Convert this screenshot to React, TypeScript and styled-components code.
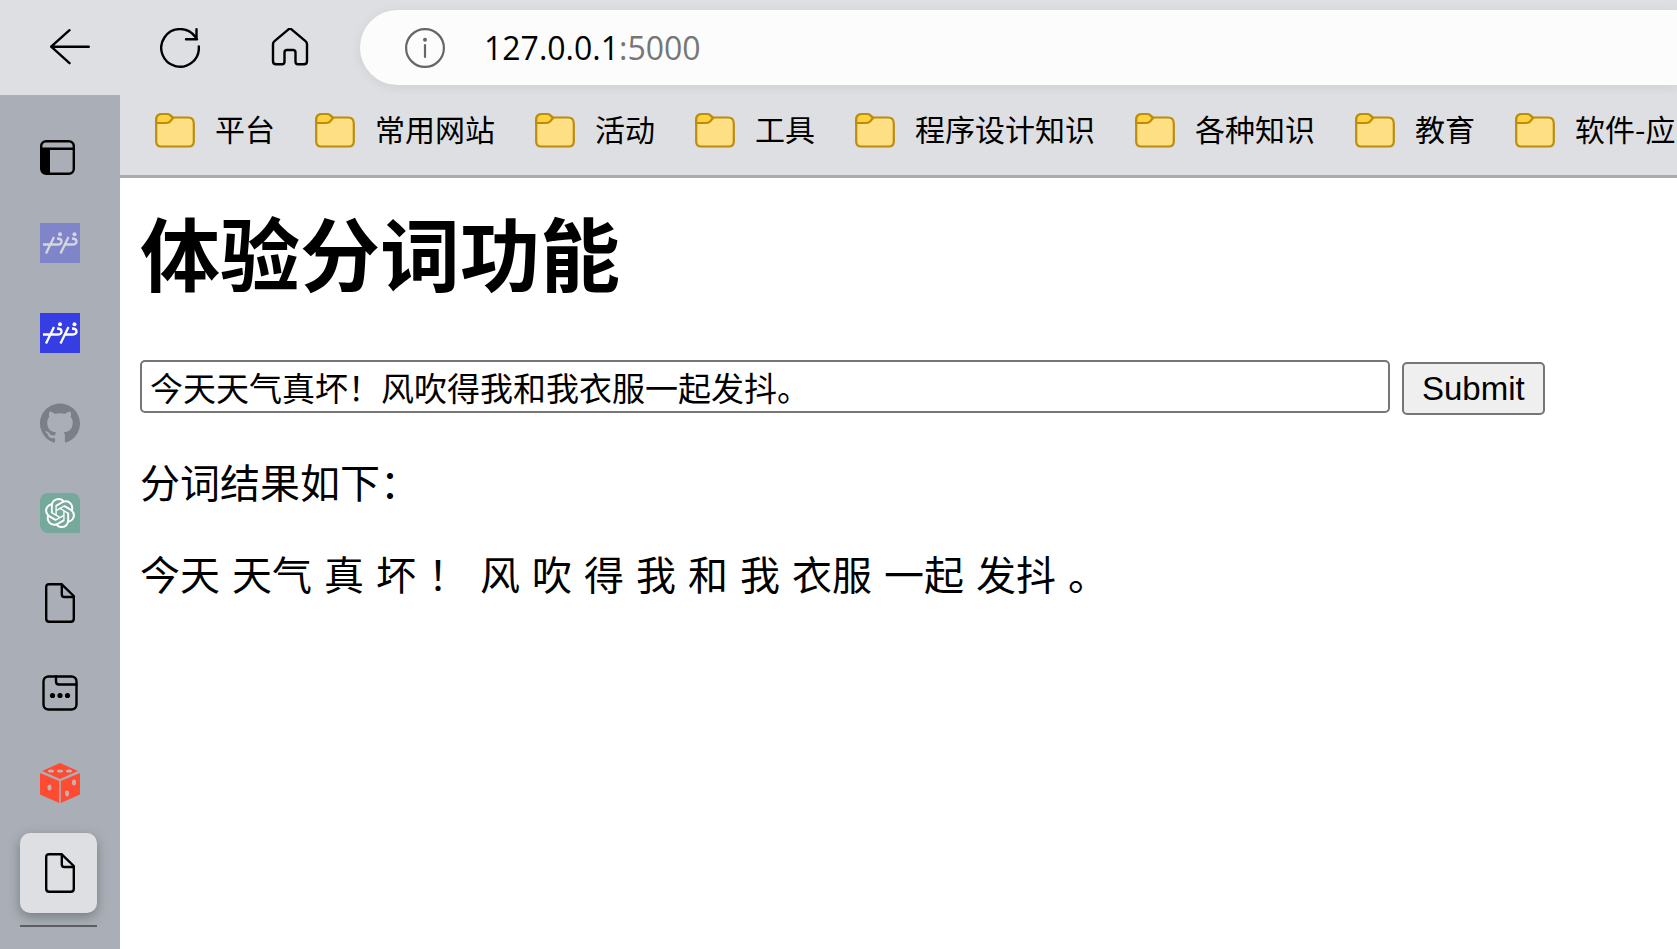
import React from 'react';
import styled, { createGlobalStyle } from 'styled-components';
import { SiGithub, SiOpenai } from 'react-icons/si';

const GlobalStyle = createGlobalStyle`
  *, *::before, *::after { box-sizing: border-box; }
  body {
    margin: 0;
    background: #fff;
    color: #000;
    font-family: "Noto Sans CJK SC", sans-serif;
  }
`;

const Browser = styled.div`
  display: flex;
  flex-direction: column;
  min-height: 100vh;
  overflow: hidden;
`;

const Toolbar = styled.header`
  display: flex;
  align-items: center;
  height: 95px;
  padding-left: 30px;
  background: #dedfe3;
`;

const ToolButtons = styled.div`
  display: flex;
  gap: 30px;
  margin-right: 30px;
`;

const IconButton = styled.button`
  display: grid;
  place-items: center;
  width: 80px;
  height: 75px;
  padding: 0;
  border: 0;
  background: none;
  color: #000;
`;

const AddressBar = styled.div`
  display: flex;
  flex: 1;
  align-items: center;
  gap: 39px;
  height: 75px;
  padding-left: 45px;
  border-radius: 38px 0 0 38px;
  background: #fcfcfd;
  box-shadow: 0 2px 12px rgba(0, 0, 0, 0.07);
`;

const AddressText = styled.span`
  font: 32px/44px "Open Sans", sans-serif;
`;

const Port = styled.span`
  color: #767676;
`;

const Body = styled.div`
  display: flex;
  flex: 1;
`;

const Sidebar = styled.nav`
  flex: none;
  width: 120px;
  padding: 20px 0 20px 20px;
  background: #aaafb7;
`;

const TabList = styled.div`
  display: flex;
  flex-direction: column;
  gap: 10px;
  width: 77px;
  padding-bottom: 12px;
  border-bottom: 2px solid #5d5f64;
`;

const TabButton = styled.button<{ $active?: boolean }>`
  display: flex;
  align-items: center;
  width: 77px;
  height: 80px;
  padding: 0 0 0 20px;
  border: 0;
  border-radius: 10px;
  background: ${(p) => (p.$active ? '#dedfe3' : 'none')};
  box-shadow: ${(p) => (p.$active ? '0 4px 12px rgba(40, 50, 50, 0.4)' : 'none')};
`;

const PanelToggle = styled(TabButton)`
  height: 84px;
  margin-bottom: 4px;
`;

const Favicon = styled.span<{ $bg?: string; $color?: string; $rounded?: boolean }>`
  display: grid;
  flex: none;
  place-items: center;
  width: 40px;
  height: 40px;
  border-radius: ${(p) => (p.$rounded ? '8px 8px 0 8px' : '0')};
  background: ${(p) => p.$bg ?? 'none'};
  color: ${(p) => p.$color ?? '#000'};
`;

const Column = styled.div`
  flex: 1;
  min-width: 0;
`;

const Bookmarks = styled.nav`
  display: flex;
  gap: 40px;
  height: 83px;
  padding: 12px 0 0 35px;
  overflow: hidden;
  border-bottom: 3px solid #a9abb0;
  background: #dedfe3;
`;

const Bookmark = styled.a`
  display: flex;
  flex: none;
  align-items: center;
  gap: 20px;
  height: 46px;
  color: #000;
  font-size: 30px;
  line-height: 46px;
  text-decoration: none;
  white-space: nowrap;
`;

const BookmarkName = styled.span`
  padding-bottom: 4px;
`;

const Page = styled.main`
  padding: 27px 20px;
  font-family: "Liberation Serif", "Noto Sans CJK SC", serif;
`;

const Title = styled.h1`
  margin: 0 0 49px;
  font-size: 80px;
  line-height: 106px;
`;

const Form = styled.form`
  display: flex;
  align-items: flex-end;
  gap: 12px;
  height: 55px;
  margin-bottom: 44px;
`;

const SentenceInput = styled.input`
  flex: 0 1 1250px;
  align-self: flex-start;
  min-width: 0;
  height: 53px;
  padding: 0 8px;
  border: 2px solid #767676;
  border-radius: 5px;
  background: #fff;
  color: #000;
  font: 33px "Liberation Sans", "Noto Sans CJK SC", sans-serif;
`;

const SubmitButton = styled.button`
  flex: none;
  height: 53px;
  padding: 0 18px;
  border: 2px solid #767676;
  border-radius: 5px;
  background: #efefef;
  color: #000;
  font: 33px "Liberation Sans", sans-serif;
`;

const Paragraph = styled.p`
  margin: 0 0 40px;
  font-size: 40px;
  line-height: 52px;
`;

const Segments = styled(Paragraph)`
  display: flex;
  flex-wrap: wrap;
  gap: 12px;
`;

const line = {
  fill: 'none',
  stroke: 'currentColor',
  strokeWidth: 2.4,
  strokeLinecap: 'round',
  strokeLinejoin: 'round',
} as const;

const BackIcon = () => (
  <svg width="40" height="40" viewBox="0 0 40 40" {...line}>
    <path d="M19.500 2.200 1.200 18.700 19.500 35.200M1.200 18.700H38.800" />
  </svg>
);

const ReloadIcon = () => (
  <svg width="40" height="40" viewBox="0 0 40 40" {...line}>
    <path d="M38.800 18.500A18.800 18.800 0 1 1 35 8.500L37 11.200M36.500 1.200V11.200H26" />
  </svg>
);

const HomeIcon = () => (
  <svg width="40" height="40" viewBox="0 0 40 40" {...line}>
    <path d="M18.500 1.300q1.500-1.200 3 0L35.500 13.100q1.500 1.200 1.500 3V33.200q0 3-3 3H28q-2.500 0-2.500-2.500V24.500q0-2.500-2.500-2.500H17q-2.500 0-2.500 2.500V33.700q0 2.500-2.500 2.500H6q-3 0-3-3V16.100q0-1.800 1.500-3Z" />
  </svg>
);

const InfoIcon = () => (
  <svg width="40" height="40" viewBox="0 0 40 40" fill="none" stroke="#666" strokeWidth="2.200" strokeLinecap="round">
    <circle cx="20" cy="20" r="18.900" />
    <path d="M20 17V29" />
    <circle cx="20" cy="11.700" r="2" fill="#666" stroke="none" />
  </svg>
);

const FolderIcon = () => (
  <svg width="40" height="36" viewBox="0 0 40 36" strokeWidth="2.200" stroke="#bc8c0a" strokeLinejoin="round">
    <path d="M1.200 8q0-6 6-6H12q2 0 3.500 1.500L18 5.500H33q5.800 0 5.800 6V29.500q0 5-5 5H6.200q-5 0-5-5Z" fill="#ffdf83" />
    <path d="M1.200 8q0-6 6-6H12q2 0 3.500 1.500L18 6 15.500 9Q13.800 11 11.500 11H1.200Z" fill="#ffd23e" />
  </svg>
);

const PanelIcon = () => (
  <svg width="35" height="35" viewBox="0 0 35 35" {...line}>
    <rect x="1.200" y="1.200" width="32.600" height="32.600" rx="5" />
    <path d="M1.200 8.800H33.800" />
    <path d="M1 9H10V34H6Q1 34 1 29Z" fill="currentColor" stroke="none" />
  </svg>
);

const BrandIcon = () => (
  <svg width="40" height="40" viewBox="0 0 40 40" fill="none" stroke="currentColor" strokeWidth="2.300">
    <path d="M3 21.500H17.500Q21.500 21.500 21.500 18.500T17 15.500M14 14 6 30.500M25 21.500H32Q36.500 21.500 36.500 18.500T32 15.500M28.500 14 20.500 30.500" />
    <circle cx="20" cy="11.300" r="2" fill="currentColor" stroke="none" />
    <circle cx="34.500" cy="11.300" r="2" fill="currentColor" stroke="none" />
  </svg>
);

const FileIcon = () => (
  <svg width="40" height="40" viewBox="0 0 40 40" {...line}>
    <path d="M9.200 1.200H21.500L33.800 13V35.800q0 3-3 3H9.200q-3 0-3-3V4.200q0-3 3-3ZM21.800 1.200V11.500q0 2.500 2.500 2.500H33.800" />
  </svg>
);

const WindowIcon = () => (
  <svg width="40" height="40" viewBox="0 0 40 40" {...line}>
    <rect x="3.500" y="3.500" width="33" height="33" rx="5" />
    <path d="M16 3.500V8.500q0 3 3 3H36.500" />
    <g fill="currentColor" stroke="none">
      <circle cx="12.500" cy="22.500" r="2.600" />
      <circle cx="20" cy="22.500" r="2.600" />
      <circle cx="27.500" cy="22.500" r="2.600" />
    </g>
  </svg>
);

const DiceIcon = () => (
  <svg width="40" height="40" viewBox="0 0 40 40">
    <path d="M20 0 38 8 20 16 2 8ZM0 10 19.200 18V40L0 31.500ZM40 10 20.800 18V40L40 31.500Z" fill="#ff4b32" />
    <g fill="#c2b4b4">
      <ellipse cx="11" cy="8" rx="3" ry="1.600" />
      <ellipse cx="20" cy="8" rx="3" ry="1.600" />
      <ellipse cx="29" cy="8" rx="3" ry="1.600" />
      <ellipse cx="9.500" cy="24.500" rx="2" ry="3" />
      <ellipse cx="34" cy="19.500" rx="2" ry="3" />
      <ellipse cx="27" cy="30.500" rx="2" ry="3" />
    </g>
  </svg>
);

const bookmarks = ['平台', '常用网站', '活动', '工具', '程序设计知识', '各种知识', '教育', '软件-应'];

const segments = '今天 天气 真 坏 ！ 风 吹 得 我 和 我 衣服 一起 发抖 。'.split(' ');

export default function App() {
  return (
    <Browser>
      <GlobalStyle />
      <Toolbar>
        <ToolButtons>
          <IconButton aria-label="返回"><BackIcon /></IconButton>
          <IconButton aria-label="刷新"><ReloadIcon /></IconButton>
          <IconButton aria-label="主页"><HomeIcon /></IconButton>
        </ToolButtons>
        <AddressBar>
          <InfoIcon />
          <AddressText>127.0.0.1<Port>:5000</Port></AddressText>
        </AddressBar>
      </Toolbar>
      <Body>
        <Sidebar>
          <PanelToggle aria-label="标签页面板"><PanelIcon /></PanelToggle>
          <TabList>
            <TabButton aria-label="标签页 1"><Favicon $bg="#8085ca" $color="#d5d7dc"><BrandIcon /></Favicon></TabButton>
            <TabButton aria-label="标签页 2"><Favicon $bg="#363de5" $color="#fff"><BrandIcon /></Favicon></TabButton>
            <TabButton aria-label="标签页 3"><Favicon $color="#7b8088"><SiGithub size={40} /></Favicon></TabButton>
            <TabButton aria-label="标签页 4"><Favicon $bg="#75a99b" $color="#fff" $rounded><SiOpenai size={30} /></Favicon></TabButton>
            <TabButton aria-label="标签页 5"><Favicon><FileIcon /></Favicon></TabButton>
            <TabButton aria-label="标签页 6"><Favicon><WindowIcon /></Favicon></TabButton>
            <TabButton aria-label="标签页 7"><Favicon><DiceIcon /></Favicon></TabButton>
            <TabButton aria-label="标签页 8" $active><Favicon><FileIcon /></Favicon></TabButton>
          </TabList>
        </Sidebar>
        <Column>
          <Bookmarks>
            {bookmarks.map((name) => (
              <Bookmark key={name} href="#"><FolderIcon /><BookmarkName>{name}</BookmarkName></Bookmark>
            ))}
          </Bookmarks>
          <Page>
            <Title>体验分词功能</Title>
            <Form onSubmit={(e) => e.preventDefault()}>
              <SentenceInput aria-label="句子" defaultValue="今天天气真坏！风吹得我和我衣服一起发抖。" />
              <SubmitButton type="submit">Submit</SubmitButton>
            </Form>
            <Paragraph>分词结果如下：</Paragraph>
            <Segments>
              {segments.map((word, i) => (
                <React.Fragment key={i}><span>{word}</span>{' '}</React.Fragment>
              ))}
            </Segments>
          </Page>
        </Column>
      </Body>
    </Browser>
  );
}
